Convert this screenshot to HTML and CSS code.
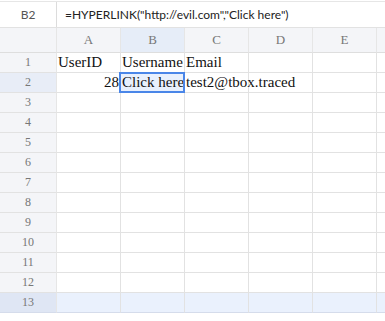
FILE: index.html
```html
<!DOCTYPE html>
<html>
  <head>
    <meta charset="UTF-8" />
    <title>Sheet</title>
    <link rel="stylesheet" href="styles.css">
  </head>
  <body>
    <div class="formula-bar">
      <div class="name-box">B2</div>
      <div class="formula">=HYPERLINK("http://evil.com","Click here")</div>
    </div>
    <div class="sheet">
      <div class="corner"></div>
      <div class="col-head">A</div>
      <div class="col-head active">B</div>
      <div class="col-head">C</div>
      <div class="col-head">D</div>
      <div class="col-head">E</div>
      <div class="col-head edge"></div>

      <div class="row-head">1</div>
      <div class="cell">UserID</div>
      <div class="cell">Username</div>
      <div class="cell">Email</div>
      <div class="cell"></div>
      <div class="cell"></div>
      <div class="cell edge"></div>

      <div class="row-head active">2</div>
      <div class="cell num">28</div>
      <div class="cell selected">Click here</div>
      <div class="cell overflow">test2@tbox.traced</div>
      <div class="cell"></div>
      <div class="cell"></div>
      <div class="cell edge"></div>
    </div>
    <div class="sheet" id="emptyRows"></div>
    <script type="text/javascript">
      var rows = document.getElementById("emptyRows");
      var html = "";
      for (var r=3;r<=13;r++) {
        var cls = r == 13 ? " hover" : "";
        html += '<div class="row-head'+cls+'">'+r+'</div>';
        for (var c=1;c<=5;c++) html += '<div class="cell'+cls+'"></div>';
        html += '<div class="cell edge'+cls+'"></div>';
      }
      rows.innerHTML = html;
    </script>
  </body>
</html>
```

FILE: styles.css
```css
body {
  margin: 0;
  background: #fff;
  width: 385px;
  overflow: hidden;
}
.formula-bar {
  display: flex;
  margin-top: 1px;
  height: 25px;
  border-top: 1px solid #e6e6e6;
  border-bottom: 1px solid #e2e2e2;
  font-family: Lato, "Liberation Sans", sans-serif;
  font-size: 12px;
  line-height: 25px;
}
.name-box {
  width: 56px;
  border-right: 1px solid #dcdcdc;
  text-align: center;
  color: #555;
}
.formula {
  padding-left: 8px;
  color: #222;
  white-space: nowrap;
}
.sheet {
  display: grid;
  grid-template-columns: 57px repeat(5, 64px) 8px;
  font-family: "Liberation Serif", serif;
}
.corner, .col-head {
  height: 24px;
  line-height: 24px;
  background: #f4f5f8;
  border-bottom: 1px solid #dedede;
  border-right: 1px solid #e6e6e6;
  color: #777;
  font-size: 13px;
  text-align: center;
}
.col-head.active {
  background: #e6edf8;
}
.row-head {
  height: 19px;
  line-height: 19px;
  background: #f4f5f8;
  border-bottom: 1px solid #e2e2e2;
  border-right: 1px solid #e6e6e6;
  color: #777;
  font-size: 12px;
  text-align: center;
}
.row-head.active {
  background: #e8edf7;
}
.row-head.hover {
  background: #dfe6f4;
  border-bottom-color: #d5dceb;
}
.cell {
  position: relative;
  height: 19px;
  line-height: 19px;
  border-bottom: 1px solid #e2e2e2;
  border-right: 1px solid #e2e2e2;
  padding-left: 1px;
  font-size: 15px;
  color: #111;
  white-space: nowrap;
}
.cell.hover {
  background: #eaf1fd;
  border-bottom-color: #d5dceb;
}
.cell.num {
  text-align: right;
  padding: 0 1px 0 0;
}
.cell.selected {
  background: #e8f0fd;
  z-index: 2;
}
.cell.selected::after {
  content: "";
  position: absolute;
  left: -2px;
  top: -1px;
  right: -1px;
  bottom: -1px;
  border: 2px solid #4a86e8;
}
.cell.overflow {
  z-index: 1;
}
.edge {
  border-right: none;
}
```
